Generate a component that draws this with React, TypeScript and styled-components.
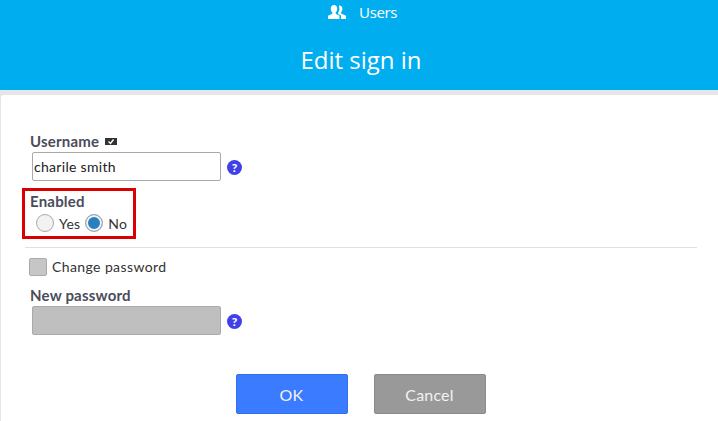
import styled, { createGlobalStyle } from 'styled-components';

const GlobalStyle = createGlobalStyle`
  html, body {
    margin: 0;
    padding: 0;
    background: #e6e6e6;
    overflow: hidden;
  }
`;

const UsersIcon = () => (
  <svg width="18" height="15" viewBox="0 0 18 15" fill="#fff">
    <path d="M6 0c2 0 3.200 1.500 3.200 3.600 0 1.600-.6 3-1.500 3.900v1.300l3.800 2v3.200H0v-3.200l4.300-2V7.500C3.400 6.600 2.800 5.200 2.800 3.600 2.800 1.500 4 0 6 0z" />
    <path d="M11.500 0.500c1.800 0 2.900 1.400 2.900 3.300 0 1.500-.5 2.700-1.300 3.500v1.300l4.900 2.200v3.200h-5v-3.600l-2.800-1.500V7.600c.8-1 1.200-2.400 1.200-4 0-1-.2-1.900-.7-2.600.2-.3.500-.5.800-.5z" />
  </svg>
);

const HelpIcon = () => <HelpBadge>?</HelpBadge>;

export default function App() {
  return (
    <Page>
      <GlobalStyle />
      <Header>
        <NavItem>
          <UsersIcon />
          <NavLabel>Users</NavLabel>
        </NavItem>
        <Title>Edit sign in</Title>
      </Header>
      <Panel>
        <FieldLabel>
          Username
          <TagIcon width="12" height="7" viewBox="0 0 12 7">
            <rect width="12" height="7" fill="#333" />
            <path d="M3.500 3.500l2 2 3-4" stroke="#fff" strokeWidth="1.300" fill="none" />
          </TagIcon>
        </FieldLabel>
        <InputRow>
          <TextInput defaultValue="charile smith" />
          <HelpIcon />
        </InputRow>
        <EnabledBox>
          <FieldLabel>Enabled</FieldLabel>
          <RadioRow>
            <Radio />
            <RadioText>Yes</RadioText>
            <Radio $checked />
            <RadioText>No</RadioText>
          </RadioRow>
        </EnabledBox>
        <Divider />
        <CheckRow>
          <CheckBox />
          <CheckText>Change password</CheckText>
        </CheckRow>
        <PasswordLabel>New password</PasswordLabel>
        <InputRow>
          <TextInput disabled />
          <HelpIcon />
        </InputRow>
        <Actions>
          <Button $primary>OK</Button>
          <Button>Cancel</Button>
        </Actions>
      </Panel>
    </Page>
  );
}

const Page = styled.div`
  width: 718px;
  height: 421px;
  overflow: hidden;
  display: flex;
  flex-direction: column;
  font-family: 'Lato', 'Liberation Sans', sans-serif;
`;

const Header = styled.header`
  height: 90px;
  flex-shrink: 0;
  background: #00aeef;
  color: #fff;
  font-family: 'Open Sans', sans-serif;
  display: flex;
  flex-direction: column;
  align-items: center;
`;

const NavItem = styled.div`
  height: 25px;
  display: flex;
  align-items: center;
  gap: 13px;
  margin-left: 7px;
`;

const NavLabel = styled.span`
  margin-top: -2px;
  font-size: 15px;
  letter-spacing: -0.4px;
`;

const Title = styled.h1`
  margin: 17px 0 0 4px;
  font-size: 24px;
  line-height: 36px;
  font-weight: 400;
`;

const Panel = styled.main`
  flex: 1;
  margin: 5px 0 0 1px;
  padding: 37px 21px 0 24px;
  background: #fff;
  border-top-left-radius: 3px;
  display: flex;
  flex-direction: column;
  align-items: flex-start;
`;

const FieldLabel = styled.label`
  display: flex;
  align-items: center;
  gap: 6px;
  margin-left: 5px;
  height: 18px;
  font-size: 15px;
  font-weight: 700;
  letter-spacing: 0.2px;
  color: #4a4c5c;
`;

const TagIcon = styled.svg`
  display: block;
  margin-top: 1px;
`;

const InputRow = styled.div`
  display: flex;
  align-items: center;
  gap: 6px;
  margin: 2px 0 0 7px;
`;

const TextInput = styled.input`
  box-sizing: border-box;
  width: 189px;
  height: 29px;
  padding: 0 1px;
  border: 1px solid #aaa;
  border-radius: 2px;
  background: #fff;
  color: #222;
  font-family: inherit;
  font-size: 14px;
  letter-spacing: 0.3px;
  outline: none;

  &:disabled {
    background: #bfbfbf;
  }
`;

const HelpBadge = styled.span`
  width: 15px;
  height: 15px;
  margin-top: 1px;
  border-radius: 50%;
  background: #4040e8;
  color: #fff;
  font-size: 12px;
  font-weight: 900;
  line-height: 15px;
  text-align: center;
`;

const EnabledBox = styled.div`
  box-sizing: border-box;
  width: 114px;
  height: 51px;
  margin: 7px 0 0 -3px;
  padding-top: 1px;
  border: 3px solid #d80000;
`;

const RadioRow = styled.div`
  display: flex;
  align-items: center;
  margin: 4px 0 0 11px;
`;

const Radio = styled.span<{ $checked?: boolean }>`
  box-sizing: border-box;
  width: 18px;
  height: 18px;
  flex-shrink: 0;
  border-radius: 50%;
  border: 1px solid #aaa;
  background: ${(p) => (p.$checked ? '#2a7fbf' : '#f2f2f2')};
  box-shadow: ${(p) => (p.$checked ? 'inset 0 0 0 2px #f2f2f2' : 'none')};
`;

const RadioText = styled.span`
  margin: 0 5px;
  font-size: 14px;
  color: #333;
  letter-spacing: 0.2px;
`;

const Divider = styled.hr`
  align-self: stretch;
  height: 1px;
  margin: 8px 0 0;
  border: 0;
  background: #e0e0e0;
`;

const CheckRow = styled.div`
  display: flex;
  align-items: center;
  gap: 5px;
  margin: 10px 0 0 4px;
`;

const CheckBox = styled.span`
  box-sizing: border-box;
  width: 18px;
  height: 18px;
  border: 1px solid #aaa;
  border-radius: 2px;
  background: #c6c6c6;
`;

const CheckText = styled.span`
  margin-top: -2px;
  font-size: 14px;
  color: #333;
  letter-spacing: 0.4px;
`;

const PasswordLabel = styled(FieldLabel)`
  margin-top: 10px;
`;

const Actions = styled.div`
  align-self: stretch;
  display: flex;
  justify-content: center;
  gap: 26px;
  margin: 39px 0 0 -24px;
  padding-left: 23px;
`;

const Button = styled.button<{ $primary?: boolean }>`
  box-sizing: border-box;
  width: 112px;
  height: 40px;
  border: 1px solid ${(p) => (p.$primary ? '#2f6fe8' : '#8a8a8a')};
  border-radius: 2px;
  background: ${(p) => (p.$primary ? '#3b7bff' : '#999999')};
  color: #f2f2f2;
  font-family: inherit;
  font-size: 16px;
  letter-spacing: 0.2px;
`;
